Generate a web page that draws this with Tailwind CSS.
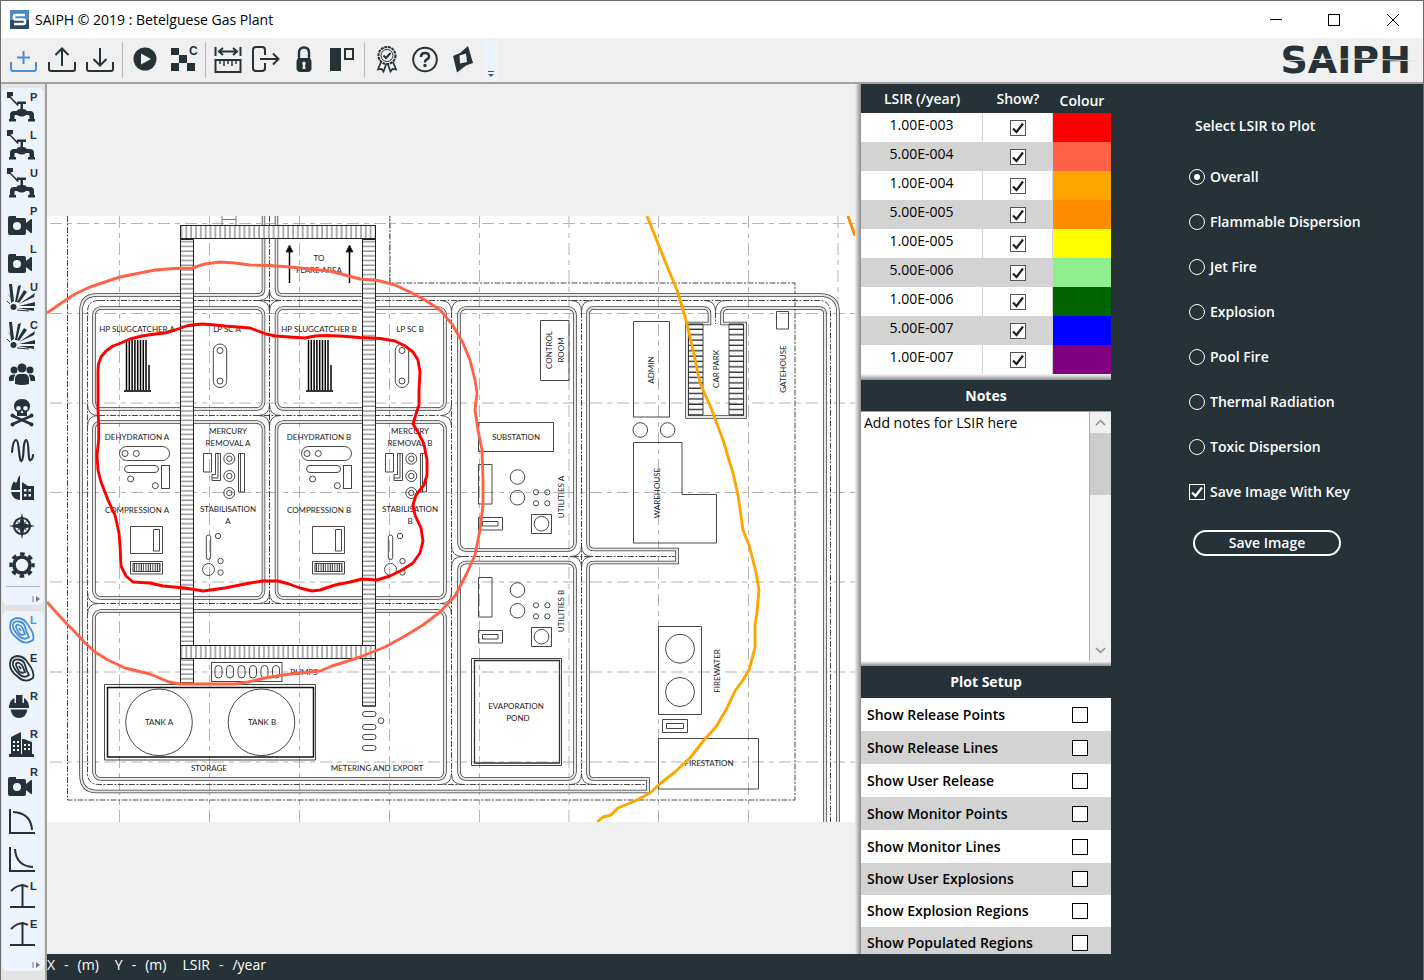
<!DOCTYPE html>
<html lang="en">
<head>
    <meta charset="UTF-8">
    <meta name="viewport" content="width=device-width, initial-scale=1.0">
    <title>SAIPH © 2019 : Betelguese Gas Plant</title>

    <!-- Tailwind CSS CDN for styling -->
    <script src="https://cdn.jsdelivr.net/npm/@tailwindcss/browser@4"></script>
</head>
<body class="flex h-screen flex-col overflow-hidden border border-b-0 border-[#6b6b6b] bg-[#f0f0f0] font-['Open_Sans','Noto_Sans',sans-serif] text-sm text-black">

    <!-- Title bar -->
    <header class="flex h-[37px] shrink-0 items-center bg-white pl-[9px]">
        <svg class="size-[19px]" viewBox="0 0 19 19">
            <rect width="19" height="11" fill="#4a8ac6"/>
            <rect y="10" width="19" height="9" fill="#2c4a63"/>
            <path d="M15 5H5.500Q4 5 4 6.500V8Q4 9.500 5.500 9.500H13.500Q15 9.500 15 11V12.500Q15 14 13.500 14H4" fill="none" stroke="#fff" stroke-width="2.600"/>
        </svg>
        <h1 class="ml-[6px]">SAIPH © 2019 : Betelguese Gas Plant</h1>
        <div class="ml-auto flex">
            <button aria-label="Minimise" class="grid h-9 w-[58px] place-items-center"><svg class="size-3" viewBox="0 0 12 12"><path d="M0 5.500H12" stroke="#000"/></svg></button>
            <button aria-label="Maximise" class="grid h-9 w-[58px] place-items-center"><svg class="size-3" viewBox="0 0 12 12"><rect x=".5" y=".5" width="11" height="11" fill="none" stroke="#000"/></svg></button>
            <button aria-label="Close" class="grid h-9 w-[60px] place-items-center"><svg class="size-3" viewBox="0 0 12 12"><path d="M0 0L12 12M12 0L0 12" stroke="#000"/></svg></button>
        </div>
    </header>

    <!-- Main toolbar -->
    <nav class="flex h-[46px] shrink-0 items-stretch border-b-2 border-[#a0a0a0] bg-[#f0f0f0] pl-1 text-[#263238]" aria-label="Main toolbar">
        <button aria-label="New" class="grid w-[38px] place-items-center text-[#4a90d2]">
            <svg class="size-7" viewBox="0 0 28 28" fill="none" stroke="currentColor" stroke-width="2"><path d="M1 16V23Q1 25 3 25H24Q26 25 26 23V16M13.500 5V18M7 11.500H20"/></svg>
        </button>
        <button aria-label="Open" class="grid w-[38px] place-items-center">
            <svg class="size-7" viewBox="0 0 28 28" fill="none" stroke="currentColor" stroke-width="2"><path d="M1 16V23Q1 25 3 25H25Q27 25 27 23V16M14 20V3M7.500 9L14 2.500L20.500 9"/></svg>
        </button>
        <button aria-label="Save" class="grid w-[38px] place-items-center">
            <svg class="size-7" viewBox="0 0 28 28" fill="none" stroke="currentColor" stroke-width="2"><path d="M1 16V23Q1 25 3 25H25Q27 25 27 23V16M14 2V19M7.500 13L14 19.500L20.500 13"/></svg>
        </button>
        <span class="mx-[3px] my-1 w-px bg-[#b4b9c0]"></span>
        <button aria-label="Run" class="grid w-[38px] place-items-center">
            <svg class="size-7" viewBox="0 0 28 28"><circle cx="14" cy="13" r="11.500" fill="currentColor"/><path d="M10 7.500L20 13L10 18.500Z" fill="#f0f0f0"/></svg>
        </button>
        <button aria-label="Run contours" class="grid w-[38px] place-items-center">
            <svg class="size-7 overflow-visible" viewBox="0 0 28 28" fill="currentColor"><path d="M2 2H10V9H2ZM10 9H18V17H10ZM2 17H10V25H2ZM18 17H26V25H18Z"/><text x="20" y="9" font-family="Liberation Sans" font-weight="700" font-size="12">C</text></svg>
        </button>
        <span class="mx-[3px] my-1 w-px bg-[#b4b9c0]"></span>
        <button aria-label="Measure" class="grid w-[38px] place-items-center">
            <svg class="size-7" viewBox="0 0 28 28" fill="none" stroke="currentColor" stroke-width="2"><path d="M1.500 1V10M26.500 1V10M5 5.500H23M9 2L5 5.500L9 9M19 2L23 5.500L19 9"/><path d="M1.500 14H26.500V26H1.500Z"/><path d="M6 14V18M10 14V20M14 14V18M18 14V20M22 14V18" stroke-width="1.500"/></svg>
        </button>
        <button aria-label="Export" class="grid w-[38px] place-items-center">
            <svg class="size-7" viewBox="0 0 28 28" fill="none" stroke="currentColor" stroke-width="2"><path d="M13 9V4Q13 1 10 1H4Q1 1 1 4V22Q1 25 4 25H10Q13 25 13 22V17M8 13H26M21 7.500L26.500 13L21 18.500"/></svg>
        </button>
        <button aria-label="Lock" class="grid w-[38px] place-items-center">
            <svg class="size-7" viewBox="0 0 28 28"><path d="M9 14V6.500Q9 1.500 14 1.500T19 6.500V14" fill="none" stroke="currentColor" stroke-width="2.400"/><rect x="6.500" y="12" width="15" height="14" rx="4" fill="currentColor"/><path d="M14 15.500A2 2 0 0 1 15 19L15.500 23H12.500L13 19A2 2 0 0 1 14 15.500Z" fill="#f0f0f0"/></svg>
        </button>
        <button aria-label="Layout" class="grid w-[38px] place-items-center">
            <svg class="size-7" viewBox="0 0 28 28"><path d="M2 2H13V25H2Z" fill="currentColor"/><path d="M17 3H25V13H17Z" fill="none" stroke="currentColor" stroke-width="2"/></svg>
        </button>
        <span class="mx-[3px] my-1 w-px bg-[#b4b9c0]"></span>
        <button aria-label="Licence" class="grid w-[38px] place-items-center">
            <svg class="size-7" viewBox="0 0 28 28" fill="none" stroke="currentColor" stroke-width="2"><circle cx="14" cy="9.500" r="8.500" stroke-dasharray="3 .7"/><circle cx="14" cy="9.500" r="6" stroke-width="1"/><path d="M10.500 9.500L13 12L17.500 7"/><path d="M8 16L5 23.500L8.500 23L10.500 25.500L13 18.500M20 16L23 23.500L19.500 23L17.500 25.500L15 18.500" stroke-width="1.700"/></svg>
        </button>
        <button aria-label="Help" class="grid w-[38px] place-items-center">
            <svg class="size-7" viewBox="0 0 28 28"><circle cx="14" cy="13.500" r="11.800" fill="none" stroke="currentColor" stroke-width="2"/><path d="M10 11Q10 7 14 7T18 10.500Q18 12.500 15.500 13.700Q14 14.500 14 16.500" fill="none" stroke="currentColor" stroke-width="2.500"/><circle cx="14" cy="19.500" r="1.700" fill="currentColor"/></svg>
        </button>
        <button aria-label="Units" class="grid w-[38px] place-items-center">
            <svg class="size-7" viewBox="0 0 28 28"><path d="M19 0L24 17L17 19.500L8 26.500L4 10L11 7Z" fill="currentColor"/><path d="M10.500 9.500L17 7.500L18 16L11 17.500Z" fill="#f0f0f0"/></svg>
        </button>
        <button aria-label="More tools" class="ml-[2px] mt-px flex w-[14px] items-end justify-center bg-[#eef4fd] pb-1">
            <svg class="h-2 w-2" viewBox="0 0 8 8"><path d="M1 1.500H7" stroke="#555"/><path d="M1 4H7L4 7Z" fill="#555"/></svg>
        </button>
        <div class="relative ml-auto flex items-center pr-3 font-['DejaVu_Sans',sans-serif] text-[38px] leading-none font-bold">
            SAIPH
            <svg class="absolute inset-x-0 top-5 h-1 w-full" viewBox="0 0 140 4" preserveAspectRatio="none"><path d="M6 3Q60 -1 134 3" fill="none" stroke="#dfe3e5" stroke-width="1"/></svg>
        </div>
    </nav>

    <div class="flex min-h-0 flex-1">

        <!-- Tool columns on the left -->
        <aside class="flex w-[46px] shrink-0 flex-col gap-[6px] border-r-2 border-[#a0a0a0] bg-[#e4e4e4] pt-1 pr-px pl-px text-[#263238]">
            <div id="tools-top" class="flex h-[517px] flex-col rounded-md bg-[#eef4fd]"></div>
            <div id="tools-bottom" class="flex h-[360px] flex-col rounded-md bg-[#eef4fd]"></div>
        </aside>

        <div class="flex min-w-0 flex-1 flex-col bg-[#263238]">
            <div class="flex min-h-0 flex-1">

                <!-- Plot area -->
                <main class="flex min-w-0 flex-1 items-center bg-[#f0f0f0]">
                    <svg class="w-full bg-white" viewBox="47 216 808 606" font-family="Lato, sans-serif" font-size="8" text-anchor="middle" role="img" aria-label="Plot plan with risk contours">
                        <defs>
                            <pattern id="rungs" width="14" height="4.700" patternUnits="userSpaceOnUse"><path d="M0 2H14" stroke="#333" stroke-width=".8"/></pattern>
                            <pattern id="bars" width="4.850" height="14" patternUnits="userSpaceOnUse"><path d="M2 0V14" stroke="#333" stroke-width=".8"/></pattern>
                            <pattern id="bays" y="1" width="15" height="5.350" patternUnits="userSpaceOnUse"><path d="M0 2H15" stroke="#111" stroke-width="1.200"/></pattern>
                            <pattern id="fins" width="2.300" height="9" patternUnits="userSpaceOnUse"><path d="M1 0V9" stroke="#222" stroke-width=".9"/></pattern>
                            <path id="kerbs" d="M263.500 216V289Q263.500 295 257.500 295H97Q81 295 81 311V775Q81 791.500 97 791.500H648V779H594Q588 779 588 773V568.500Q588 562.500 594 562.500H677V549.500H594Q588 549.500 588 543.500V314Q588 308 594 308H703Q709.500 308 709.500 314V323.500H687V417H745V323.500H722V314Q722 308 728 308H819Q825 308 825 314V822
                                M276.500 216V289Q276.500 295 282.500 295H821Q838 296 838 312V822"/>
                            <g id="blocks">
                                <rect x="94" y="308" width="169.500" height="101" rx="7"/>
                                <rect x="276.500" y="308" width="168.500" height="101" rx="7"/>
                                <rect x="94" y="422" width="169.500" height="176" rx="7"/>
                                <rect x="276.500" y="422" width="168.500" height="176" rx="7"/>
                                <rect x="94" y="611" width="351" height="168" rx="7"/>
                                <rect x="459" y="308" width="116" height="242" rx="7"/>
                                <rect x="459" y="562.500" width="116" height="216.500" rx="7"/>
                            </g>
                            <path id="cnw" d="M-11 0Q0 0 0 -11"/>
                            <path id="cne" d="M11 0Q0 0 0 -11"/>
                            <path id="csw" d="M-11 0Q0 0 0 11"/>
                            <path id="cse" d="M11 0Q0 0 0 11"/>

                            <!-- process train, drawn twice -->
                            <g id="train">
                                <path d="M126.500 340V390M129.300 340V390M132.100 340V390M134.900 340V390M137.700 340V390M140.500 340V390M143.300 340V390M146 340V390M149 365V390" stroke="#000" stroke-width="1.500"/>
                                <path d="M124 391H151" stroke="#000" stroke-width="1.600"/>
                                <rect x="213.300" y="344" width="13.400" height="43.500" rx="6.700"/>
                                <circle cx="220" cy="350.500" r="3"/><circle cx="220" cy="381" r="3"/>
                                <rect x="119.500" y="446.500" width="50" height="14" rx="7"/>
                                <circle cx="125" cy="453.500" r="3"/><circle cx="136.300" cy="453.500" r="3"/>
                                <rect x="124.500" y="465.500" width="34" height="7" rx="3.500"/>
                                <rect x="161.500" y="465.500" width="8" height="23"/>
                                <circle cx="130.600" cy="479" r="3"/><circle cx="155.300" cy="485.700" r="3"/>
                                <path d="M203.500 453.500H211.500V472H203.500ZM215.500 453.500H220.500V480.500H212V474.500H215.500ZM218 453.500V478H212M238.500 453.500H244.500V492H238.500ZM240.500 453.500V492"/>
                                <circle cx="229.300" cy="458.700" r="5.500"/><circle cx="229.300" cy="458.700" r="2.700"/>
                                <circle cx="229.300" cy="476" r="5.500"/><circle cx="229.300" cy="476" r="2.700"/>
                                <circle cx="229.300" cy="493" r="5.500"/><circle cx="229.300" cy="493" r="2.700"/>
                                <path d="M130.500 526.500H162.500V553.500H130.500ZM153.500 529.500H159.500V551H153.500ZM130.500 561.500H162.500V574H130.500Z"/>
                                <rect x="133" y="563.500" width="27" height="8" fill="url(#fins)"/>
                                <rect x="206.300" y="535" width="4.400" height="24.500" rx="2.200"/>
                                <circle cx="218" cy="536" r="2.700"/><circle cx="220.500" cy="561" r="2.700"/><circle cx="220.500" cy="572.500" r="2.700"/><circle cx="208.500" cy="569.500" r="6"/>
                            </g>

                            <g id="utilities">
                                <path d="M478.500 464.500H492V504H478.500ZM478.500 517.500H502.500V530H478.500ZM482.500 521.500H498V526H482.500ZM531.500 514.500H551.500V533.500H531.500Z"/>
                                <circle cx="517.500" cy="477" r="7.300"/><circle cx="517.500" cy="497.700" r="7.300"/><circle cx="541.500" cy="523.700" r="7.300"/>
                                <circle cx="536" cy="492.300" r="2.600"/><circle cx="547.300" cy="492.300" r="2.600"/><circle cx="536" cy="503.300" r="2.600"/><circle cx="547.300" cy="503.300" r="2.600"/>
                            </g>
                        </defs>

                        <!-- survey grid -->
                        <path d="M119.500 216V822M209.500 216V822M299.500 216V822M389.500 216V822M479.500 216V822M569 216V822M658.500 216V822M748.500 216V822M838 216V822M50 223.500H855M50 313.500H855M50 403H855M50 492.500H855M50 582H855M50 672H855M50 762H855" fill="none" stroke="#b5b5b5" stroke-dasharray="12 5 5 5"/>

                        <!-- fence -->
                        <path d="M67.500 216V800H795V283H390V216" fill="none" stroke="#333" stroke-width=".9" stroke-dasharray="6 1.500 2 1.500"/>

                        <!-- roads -->
                        <g fill="none">
                            <use href="#kerbs" stroke="#3c3c3c" stroke-width="3.500"/>
                            <use href="#kerbs" stroke="#e6e6e6" stroke-width="2"/>
                            <use href="#blocks" stroke="#3c3c3c" stroke-width="3.500"/>
                            <use href="#blocks" stroke="#e6e6e6" stroke-width="2"/>
                            <path d="M269.500 216V603.500M451.500 312V773M581.500 312V773M715.500 312V324M99 300.500H819Q830.500 300.500 830.500 314V822M99 300.500Q87.500 300.500 87.500 312V773Q87.500 784.500 99 784.500H646M99 415.500H440M99 603.500H440M463 556.500H675" stroke="#333" stroke-width=".9" stroke-dasharray="6 1.500 2 1.500"/>
                            <g stroke="#444" stroke-width=".9">
                                <use href="#cnw" x="269.500" y="300.500"/><use href="#cne" x="269.500" y="300.500"/><use href="#csw" x="269.500" y="300.500"/><use href="#cse" x="269.500" y="300.500"/>
                                <use href="#cnw" x="269.500" y="415.500"/><use href="#cne" x="269.500" y="415.500"/><use href="#csw" x="269.500" y="415.500"/><use href="#cse" x="269.500" y="415.500"/>
                                <use href="#cnw" x="581.500" y="556.500"/><use href="#cne" x="581.500" y="556.500"/><use href="#csw" x="581.500" y="556.500"/><use href="#cse" x="581.500" y="556.500"/>
                                <use href="#cnw" x="269.500" y="603.500"/><use href="#cne" x="269.500" y="603.500"/>
                                <use href="#csw" x="451.500" y="300.500"/><use href="#cse" x="451.500" y="300.500"/>
                                <use href="#csw" x="581.500" y="300.500"/><use href="#cse" x="581.500" y="300.500"/>
                                <use href="#csw" x="715.500" y="300.500"/><use href="#cse" x="715.500" y="300.500"/>
                                <use href="#cnw" x="451.500" y="415.500"/><use href="#csw" x="451.500" y="415.500"/>
                                <use href="#cnw" x="451.500" y="603.500"/><use href="#csw" x="451.500" y="603.500"/>
                                <use href="#cne" x="451.500" y="556.500"/><use href="#cse" x="451.500" y="556.500"/>
                                <use href="#cne" x="87.500" y="415.500"/><use href="#cse" x="87.500" y="415.500"/>
                                <use href="#cne" x="87.500" y="603.500"/><use href="#cse" x="87.500" y="603.500"/>
                                <use href="#cnw" x="451.500" y="784.500"/><use href="#cne" x="451.500" y="784.500"/>
                                <use href="#cnw" x="581.500" y="784.500"/><use href="#cne" x="581.500" y="784.500"/>
                            </g>
                        </g>

                        <!-- pipe racks -->
                        <g stroke="#222">
                            <path d="M180.500 239.500H193.500V683H180.500ZM362.500 239.500H375.500V706H362.500Z" fill="#fff"/>
                            <path d="M180.500 239.500H193.500V683H180.500ZM362.500 239.500H375.500V706H362.500Z" fill="url(#rungs)"/>
                            <path d="M180.500 225.500H375.500V238.500H180.500ZM180.500 645.500H375.500V658.500H180.500Z" fill="#fff"/>
                            <path d="M180.500 225.500H375.500V238.500H180.500ZM180.500 645.500H375.500V658.500H180.500Z" fill="url(#bars)"/>
                            <path d="M222 216V225M236 216V225M222 219.500H236" fill="none" stroke="#777"/>
                        </g>

                        <!-- equipment and buildings -->
                        <g fill="none" stroke="#333" stroke-width=".9">
                            <use href="#train"/>
                            <use href="#train" x="182"/>
                            <use href="#utilities"/>
                            <use href="#utilities" y="113"/>
                            <path d="M289.500 250V283M349.500 250V283" stroke="#000" stroke-width="1.500"/>
                            <path d="M286 252L289.500 245L293 252ZM346 252L349.500 245L353 252Z" fill="#000"/>
                            <path d="M478.500 422.500H553.500V451.500H478.500ZM540.500 320.500H569V380.500H540.500ZM633.500 321.500H669.500V417H633.500ZM633.500 442.500H682V494.500H716.500V543H633.500ZM776.500 311.500H788.500V329H776.500Z"/>
                            <path d="M658.500 626.500H701.500V714.500H658.500ZM662.500 719.500H687.500V732.500H662.500ZM666.500 723.500H683.500V728.500H666.500ZM658.500 738.500H758.500V789H658.500ZM471.500 658.500H561.500V765.500H471.500Z"/>
                            <path d="M474.500 660.500H559.500V763H474.500Z" stroke-width="1.300"/>
                            <circle cx="640.300" cy="430" r="7.300"/><circle cx="667.600" cy="430" r="7.300"/>
                            <circle cx="680" cy="648.700" r="14.500"/><circle cx="680" cy="692" r="14.500"/>
                            <path d="M104.500 684.500H315.500V760H104.500Z"/>
                            <path d="M107.500 687.500H313.500V757H107.500Z" stroke="#111" stroke-width="1.500"/>
                            <circle cx="159" cy="722.300" r="33.300"/><circle cx="261.500" cy="722.300" r="33.300"/>
                            <rect x="211.500" y="662.500" width="70.500" height="19"/>
                            <g id="pumps">
                                <rect x="215" y="665.500" width="7" height="12.500" rx="3.500"/><rect x="226.500" y="665.500" width="7" height="12.500" rx="3.500"/><rect x="238" y="665.500" width="7" height="12.500" rx="3.500"/>
                            </g>
                            <use href="#pumps" x="34.500"/>
                            <rect x="362.500" y="711.500" width="13.500" height="5" rx="2.500"/><rect x="362.500" y="724.500" width="13.500" height="5" rx="2.500"/><rect x="362.500" y="734.500" width="13.500" height="5" rx="2.500"/><rect x="362.500" y="745.500" width="13.500" height="5" rx="2.500"/>
                            <circle cx="381" cy="720.700" r="2.800"/>
                            <path d="M688.500 324V415H703V324ZM729 324V415H743.500V324Z" fill="url(#bays)"/>
                        </g>

                        <!-- labels -->
                        <g fill="#222">
                            <text x="319" y="261">TO</text><text x="319" y="273">FLARE AREA</text>
                            <text x="137" y="332">HP SLUGCATCHER A</text><text x="227" y="332">LP SC A</text>
                            <text x="319" y="332">HP SLUGCATCHER B</text><text x="410" y="332">LP SC B</text>
                            <text x="137" y="440">DEHYDRATION A</text><text x="319" y="440">DEHYDRATION B</text>
                            <text x="228" y="434">MERCURY</text><text x="228" y="446">REMOVAL A</text>
                            <text x="410" y="434">MERCURY</text><text x="410" y="446">REMOVAL B</text>
                            <text x="137" y="513">COMPRESSION A</text><text x="319" y="513">COMPRESSION B</text>
                            <text x="228" y="512">STABILISATION</text><text x="228" y="524">A</text>
                            <text x="410" y="512">STABILISATION</text><text x="410" y="524">B</text>
                            <text x="516" y="440">SUBSTATION</text>
                            <text x="516" y="709">EVAPORATION</text><text x="518" y="721">POND</text>
                            <text x="159" y="725">TANK A</text><text x="262" y="725">TANK B</text>
                            <text x="209" y="771">STORAGE</text><text x="377" y="771">METERING AND EXPORT</text>
                            <text x="304" y="675">PUMPS</text><text x="709" y="766">FIRESTATION</text>
                            <text transform="translate(552 350) rotate(-90)">CONTROL</text><text transform="translate(564 350) rotate(-90)">ROOM</text>
                            <text transform="translate(654 370) rotate(-90)">ADMIN</text><text transform="translate(719 369) rotate(-90)">CAR PARK</text>
                            <text transform="translate(786 369) rotate(-90)">GATEHOUSE</text><text transform="translate(660 493) rotate(-90)">WAREHOUSE</text>
                            <text transform="translate(564 497) rotate(-90)">UTILITIES A</text><text transform="translate(564 611) rotate(-90)">UTILITIES B</text>
                            <text transform="translate(720 671) rotate(-90)">FIREWATER</text>
                        </g>

                        <!-- risk contours -->
                        <g fill="none" stroke-width="2.900" stroke-linejoin="round">
                            <polyline stroke="#ffa500" points="647,216 655,236 667,266 677,290 686,320 693,350 700,383 711,408 723,440 733,473 738,495 743,530 749,545 756,572 759,590 757,612 755,625 755,648 749,670 743,680 735,691 727,708 716,727 704,740 690,758 675,772 661,783 650,793 635,801 618,808 611,815 603,817 597,822"/>
                            <polyline stroke="#ff8c00" points="848,216 855,236"/>
                            <polyline stroke="#ff6347" points="47,313 60,304 75,294 90,287 105,282 120,277 140,273 155,270 175,268.500 192,268 205,264 220,262 235,263 250,265 270,265.500 290,267 310,269 330,271 345,275 360,279 378,280.500 395,285 412,293 425,300 440,310 452,324 463,343 470,360 475,380 477,393 475,410 478,430 482,450 483,480 483,505 480,530 475,555 466,575 455,596 440,612 423,625 405,636 385,647 360,657 345,662 332,666 320,671 300,673 283,675 265,678 248,682 235,684 205,684 180,684 169,682 150,674 125,668 108,660 95,652 85,643 75,632 67,624 55,611 47,602"/>
                            <polygon stroke="#ff0000" points="98,410 98,370 98.500,364 101,357 106,351 113,346 121,343 130,339 142,336 155,334 165,333 175,330 188,325.500 202,324 215,325 225,326 238,327 250,328 258,331 266,334 275,336 290,337 305,338 315,336 325,335.500 340,336 360,337.500 380,338.500 395,341 405,346 413,352 418,360 420,372 419,390 419,405 416,414 413,424 418,432 424,444 427,460 427,475 424,485 416,495 413,505 415,515 421,528 423,541 420,553 413,563 402,570 390,576 377,580 362,579 350,582 335,585 320,590 312,591 300,588 289,584 278,581 262,581 245,584 225,588 203,591 185,588 163,586 150,583 133,582 126,576 121,566 120,545 119,533 115,515 108,500 101,482 98,470 97,455 98.700,440 98.700,425"/>
                        </g>
                    </svg>
                    <div class="w-[6px] shrink-0 self-stretch bg-linear-to-r from-[#f0f0f0] to-[#8c8c8c]"></div>
                </main>

                <!-- Key, notes and plot setup -->
                <section class="flex w-[250px] shrink-0 flex-col">
                    <table class="w-full table-fixed border-separate border-spacing-0">
                        <thead>
                            <tr class="h-[29px] bg-[#263238] text-white">
                                <th class="w-[122px] p-0 font-semibold">LSIR (/year)</th>
                                <th class="w-[70px] p-0 font-semibold">Show?</th>
                                <th class="w-[58px] p-0 pt-1 font-semibold">Colour</th>
                            </tr>
                        </thead>
                        <tbody id="lsir-rows"></tbody>
                    </table>
                    <div class="h-[6px] shrink-0 bg-linear-to-b from-white to-[#8c8c8c]"></div>

                    <h2 class="h-[31px] shrink-0 pt-[6px] text-center font-bold text-white"><label for="notes">Notes</label></h2>
                    <div class="flex h-[250px] shrink-0 border-t border-[#a0a0a0] bg-white">
                        <textarea id="notes" class="min-w-0 flex-1 resize-none overflow-hidden px-[3px] pt-px outline-none">Add notes for LSIR here</textarea>
                        <div class="flex w-[22px] flex-col items-center border-l border-[#b0b0b0] bg-[#f0f0f0]">
                            <svg class="m-[5px] size-[11px] shrink-0" viewBox="0 0 11 11"><path d="M1 8L5.500 3.500L10 8" fill="none" stroke="#8c8c8c" stroke-width="1.500"/></svg>
                            <div class="h-[62px] w-full bg-[#cdcdcd]"></div>
                            <svg class="m-[5px] mt-auto size-[11px] shrink-0" viewBox="0 0 11 11"><path d="M1 3L5.500 7.500L10 3" fill="none" stroke="#8c8c8c" stroke-width="1.500"/></svg>
                        </div>
                    </div>
                    <div class="h-[5px] shrink-0 bg-linear-to-b from-white to-[#8c8c8c]"></div>

                    <h2 class="h-8 shrink-0 pt-[6px] text-center font-bold text-white">Plot Setup</h2>
                    <div id="setup-rows" class="min-h-0 flex-1 overflow-hidden"></div>
                </section>

                <!-- LSIR selection -->
                <form class="flex w-[312px] shrink-0 flex-col pt-8 pl-[78px] font-semibold text-white">
                    <h2 class="mb-[31px] pl-[6px]">Select LSIR to Plot</h2>
                    <div id="plot-options" class="flex flex-col gap-[25px]"></div>
                    <label class="mt-[25px] flex h-5 items-center gap-[5px]">
                        <span class="grid place-items-center">
                            <input type="checkbox" checked class="peer col-start-1 row-start-1 size-4 appearance-none border border-white">
                            <svg class="pointer-events-none col-start-1 row-start-1 hidden size-3 peer-checked:block" viewBox="0 0 12 12"><path d="M1 6.500L4.500 10L11 1.500" fill="none" stroke="#fff" stroke-width="2.200"/></svg>
                        </span>
                        Save Image With Key
                    </label>
                    <button type="button" class="mt-[28px] ml-1 h-[26px] w-[148px] rounded-full border-2 border-white leading-none">Save Image</button>
                </form>
            </div>

            <footer class="flex h-[26px] shrink-0 gap-4 pt-px text-white">
                <span class="flex gap-[9px]"><span>X</span><span>-</span><span>(m)</span></span>
                <span class="flex gap-[9px]"><span>Y</span><span>-</span><span>(m)</span></span>
                <span class="flex gap-[9px]"><span>LSIR</span><span>-</span><span>/year</span></span>
            </footer>
        </div>
    </div>

    <script>
        // --- 1. LEFT TOOL ICONS (30 x 30 boxes) ---
        const letter = (l) => `<text x="22" y="9" font-family="Liberation Sans" font-weight="700" font-size="11">${l}</text>`;
        const tap = `<path d="M0 0H6V4L3.500 4.500L12 13L10.500 14L3 6L0 6Z"/><path d="M10 9.500H19V12H16V17Q19 17 20 19H23Q27 19 27 23V27H28V29.500H21V27H22.500V24Q22.500 23 21 23H19Q15 26 10 23H8.500Q7.500 23 7.500 24V27H9V29.500H2V27H3V23Q3 19 7 19H9.500Q10.500 17 13.500 17V12H10Z"/>`;
        const camera = `<path fill-rule="evenodd" d="M3 10H9V12H17Q19 12 19 14V17L24 13H25V27H24L19 23V27Q19 29 17 29H3Q1 29 1 27V12Q1 10 3 10ZM10 16A4 4 0 1 0 10 24A4 4 0 1 0 10 16Z"/>`;
        const burst = `<path d="M4 21L2 2L5 2L7 19ZM8 20L11 4L14 3L10 20ZM10 20L17 8L20 10L12 21ZM12 22L28 11L27 15ZM12 24L28 20V24ZM11 26L27 26V29ZM5 18L0 10L3 14Z"/><circle cx="6.500" cy="25" r="3"/><path d="M3 22L0 19M10 28L22 29" stroke="currentColor"/>`;
        const contour = `<g fill="none" stroke="currentColor" stroke-width="1.800"><path d="M3 11Q3 4 10 3Q17 3 21 10Q28 19 26 25Q18 31 10 23Q3 18 3 11Z"/><path d="M6 12Q5 6 11 6.500T18 12T22 22Q17 26 12 21T6 12Z"/><path d="M9 12Q9 9 12 10T16 14T18 19Q14 21 12 18T9 12Z"/><path d="M12 13L14 16"/></g>`;
        const people = `<circle cx="15" cy="8" r="4.500"/><path d="M8 24V19Q8 15 12 14H18Q22 15 22 19V24Q15 26 8 24Z"/><circle cx="7" cy="10" r="3.500"/><circle cx="23" cy="10" r="3.500"/><path d="M2 21V18Q2 15 6 14.500H8.500Q6.500 17 6.500 21ZM28 21V18Q28 15 24 14.500H21.500Q23.500 17 23.500 21Z"/>`;
        const skull = `<path fill-rule="evenodd" d="M15 1Q23 1 23 9Q23 12 20 14V18H10V14Q7 12 7 9Q7 1 15 1ZM11.500 8A2.300 2.300 0 1 0 11.500 12.600A2.300 2.300 0 1 0 11.500 8ZM18.500 8A2.300 2.300 0 1 0 18.500 12.600A2.300 2.300 0 1 0 18.500 8ZM15 12L13.500 15H16.500Z"/><path d="M6 18L24 26M24 18L6 26" stroke="currentColor" stroke-width="2.600"/><circle cx="5.500" cy="17.500" r="2"/><circle cx="24.500" cy="17.500" r="2"/><circle cx="5.500" cy="26.500" r="2"/><circle cx="24.500" cy="26.500" r="2"/>`;
        const wave = `<path d="M5 16Q6 4 9 4Q11 4 12 15T14.500 25Q16 25 16.500 15T19 4Q21 4 21.500 15T23.500 24Q25.500 24 26 19" fill="none" stroke="currentColor" stroke-width="2.200" stroke-linecap="round"/>`;
        const pie = `<path d="M13 1V16H4Q4 11 7 7Q8 10 10 8Q10 4 13 1ZM4 18H13V26Q5 25 4 18Z"/><path fill-rule="evenodd" d="M15 8L21 12H27V26H15ZM17 15V17.500H19.500V15ZM21.500 15V17.500H24V15ZM17 20V22.500H19.500V20ZM21.500 20V22.500H24V20Z"/>`;
        const compass = `<circle cx="15" cy="14" r="8" fill="none" stroke="currentColor" stroke-width="2.200"/><path d="M15 1L17.500 11.500L28 14L17.500 16.500L15 27L12.500 16.500L2 14L12.500 11.500Z"/><path d="M9.500 8.500L15 12.500L20.500 8.500L17 14L20.500 19.500L15 15.500L9.500 19.500L13 14Z" opacity=".8"/>`;
        const gear = `<circle cx="15" cy="15" r="8" fill="none" stroke="currentColor" stroke-width="3.600"/><circle cx="15" cy="15" r="11" fill="none" stroke="currentColor" stroke-width="3.400" stroke-dasharray="4.600 4.040" stroke-dashoffset="2.300"/>`;
        const helmet = `<path d="M2 17H22V15Q21 9 17 7V12H15.500V4H9V12H7.500V7Q3 9 2 15ZM3.500 18.500H20.500Q19 27 12 27T3.500 18.500Z"/>`;
        const city = `<path fill-rule="evenodd" d="M4 8L14 3V25H15V10H17L25 13V25H27V28H2V25H4ZM6 12V14H8V12ZM10 12V14H12V12ZM6 16V18H8V16ZM10 16V18H12V16ZM6 20V22H8V20ZM10 20V22H12V20ZM17 15V17H19V15ZM21 15V17H23V15ZM17 19V21H19V19ZM21 19V21H23V19Z"/>`;
        const curveOut = `<path d="M3 2V26H28M6 5Q24 6 25 23" fill="none" stroke="currentColor" stroke-width="2"/>`;
        const curveIn = `<path d="M3 2V26H28M8 4Q9 21 26 22" fill="none" stroke="currentColor" stroke-width="2"/>`;
        const pole = `<path d="M3 26H28M15.500 26V3M4 10Q13 1 21 6" fill="none" stroke="currentColor" stroke-width="2"/>`;

        // name, drawing, corner letter
        const topTools = [
            ['Point release', tap, 'P'], ['Line release', tap, 'L'], ['User release', tap, 'U'],
            ['Point monitor', camera, 'P'], ['Line monitor', camera, 'L'],
            ['User explosion', burst, 'U'], ['Congested explosion', burst, 'C'],
            ['Population', people, ''], ['Toxicity', skull, ''], ['Frequency', wave, ''],
            ['Building impact', pie, ''], ['Wind', compass, ''], ['Settings', gear, ''],
        ];
        const bottomTools = [
            ['LSIR contours', contour, 'L'], ['Exceedance contours', contour, 'E'], ['Worker risk', helmet, 'R'],
            ['Building risk', city, 'R'], ['Monitor risk', camera, 'R'],
            ['FN curve', curveOut, ''], ['Exceedance curve', curveIn, ''],
            ['Line transect', pole, 'L'], ['Exceedance transect', pole, 'E'],
        ];

        const toolButton = ([name, art, tag]) => `
            <button aria-label="${name}" class="grid h-[38px] place-items-center ${name === 'LSIR contours' ? 'text-[#4a90d2]' : ''}">
                <svg class="size-[30px] overflow-visible" viewBox="0 0 30 30" fill="currentColor"><g transform="translate(-1 ${tag ? 0 : 2})">${art}</g>${tag ? letter(tag) : ''}</svg>
            </button>`;
        const moreButton = `
            <button aria-label="More" class="mt-auto mr-1 mb-[2px] self-end">
                <svg class="h-2 w-2" viewBox="0 0 8 8"><path d="M1 1V7" stroke="#777"/><path d="M4 1V7L8 4Z" fill="#777"/></svg>
            </button>`;
        document.getElementById('tools-top').innerHTML =
            topTools.map(toolButton).join('') + '<span class="mx-1 mt-1 h-px bg-[#b4b9c0]"></span>' + moreButton;
        document.getElementById('tools-bottom').innerHTML = bottomTools.map(toolButton).join('') + moreButton;

        // --- 2. LSIR KEY ---
        const levels = [
            ['1.00E-003', '#ff0000'], ['5.00E-004', '#ff6347'], ['1.00E-004', '#ffa500'],
            ['5.00E-005', '#ff8c00'], ['1.00E-005', '#ffff00'], ['5.00E-006', '#90ee90'],
            ['1.00E-006', '#006400'], ['5.00E-007', '#0000ff'], ['1.00E-007', '#800080'],
        ];
        document.getElementById('lsir-rows').innerHTML = levels.map(([value, colour]) => `
            <tr class="h-[29px] bg-white even:bg-[#d3d3d3]">
                <td class="border-r border-[#d3d3d3] p-0 pb-[5px] text-center">${value}</td>
                <td class="border-r border-[#d3d3d3] p-0">
                    <span class="grid place-items-center">
                        <input type="checkbox" checked aria-label="Show ${value}" class="peer col-start-1 row-start-1 size-4 appearance-none border border-[#555] bg-white">
                        <svg class="pointer-events-none col-start-1 row-start-1 hidden size-3 peer-checked:block" viewBox="0 0 12 12"><path d="M1 6.500L4.500 10L11 1.500" fill="none" stroke="#222" stroke-width="2.200"/></svg>
                    </span>
                </td>
                <td class="p-0" style="background-color: ${colour}"></td>
            </tr>`).join('');

        // --- 3. PLOT SETUP ---
        const setup = ['Release Points', 'Release Lines', 'User Release', 'Monitor Points', 'Monitor Lines', 'User Explosions', 'Explosion Regions', 'Populated Regions'];
        document.getElementById('setup-rows').innerHTML = setup.map((item, i) => `
            <label class="flex items-center justify-between bg-white pr-[23px] pl-[6px] font-semibold even:bg-[#d3d3d3] ${i < 5 ? 'h-[33px]' : 'h-8'}">
                Show ${item}
                <input type="checkbox" class="size-4 appearance-none border border-black bg-white checked:bg-[#222]">
            </label>`).join('');

        // --- 4. PLOT OPTIONS ---
        const options = ['Overall', 'Flammable Dispersion', 'Jet Fire', 'Explosion', 'Pool Fire', 'Thermal Radiation', 'Toxic Dispersion'];
        document.getElementById('plot-options').innerHTML = options.map((item, i) => `
            <label class="flex h-5 items-center gap-[5px]">
                <input type="radio" name="plot" ${i === 0 ? 'checked' : ''} class="grid size-4 appearance-none place-items-center rounded-full border border-white checked:before:size-[6px] checked:before:rounded-full checked:before:bg-white">
                ${item}
            </label>`).join('');
    </script>
</body>
</html>
